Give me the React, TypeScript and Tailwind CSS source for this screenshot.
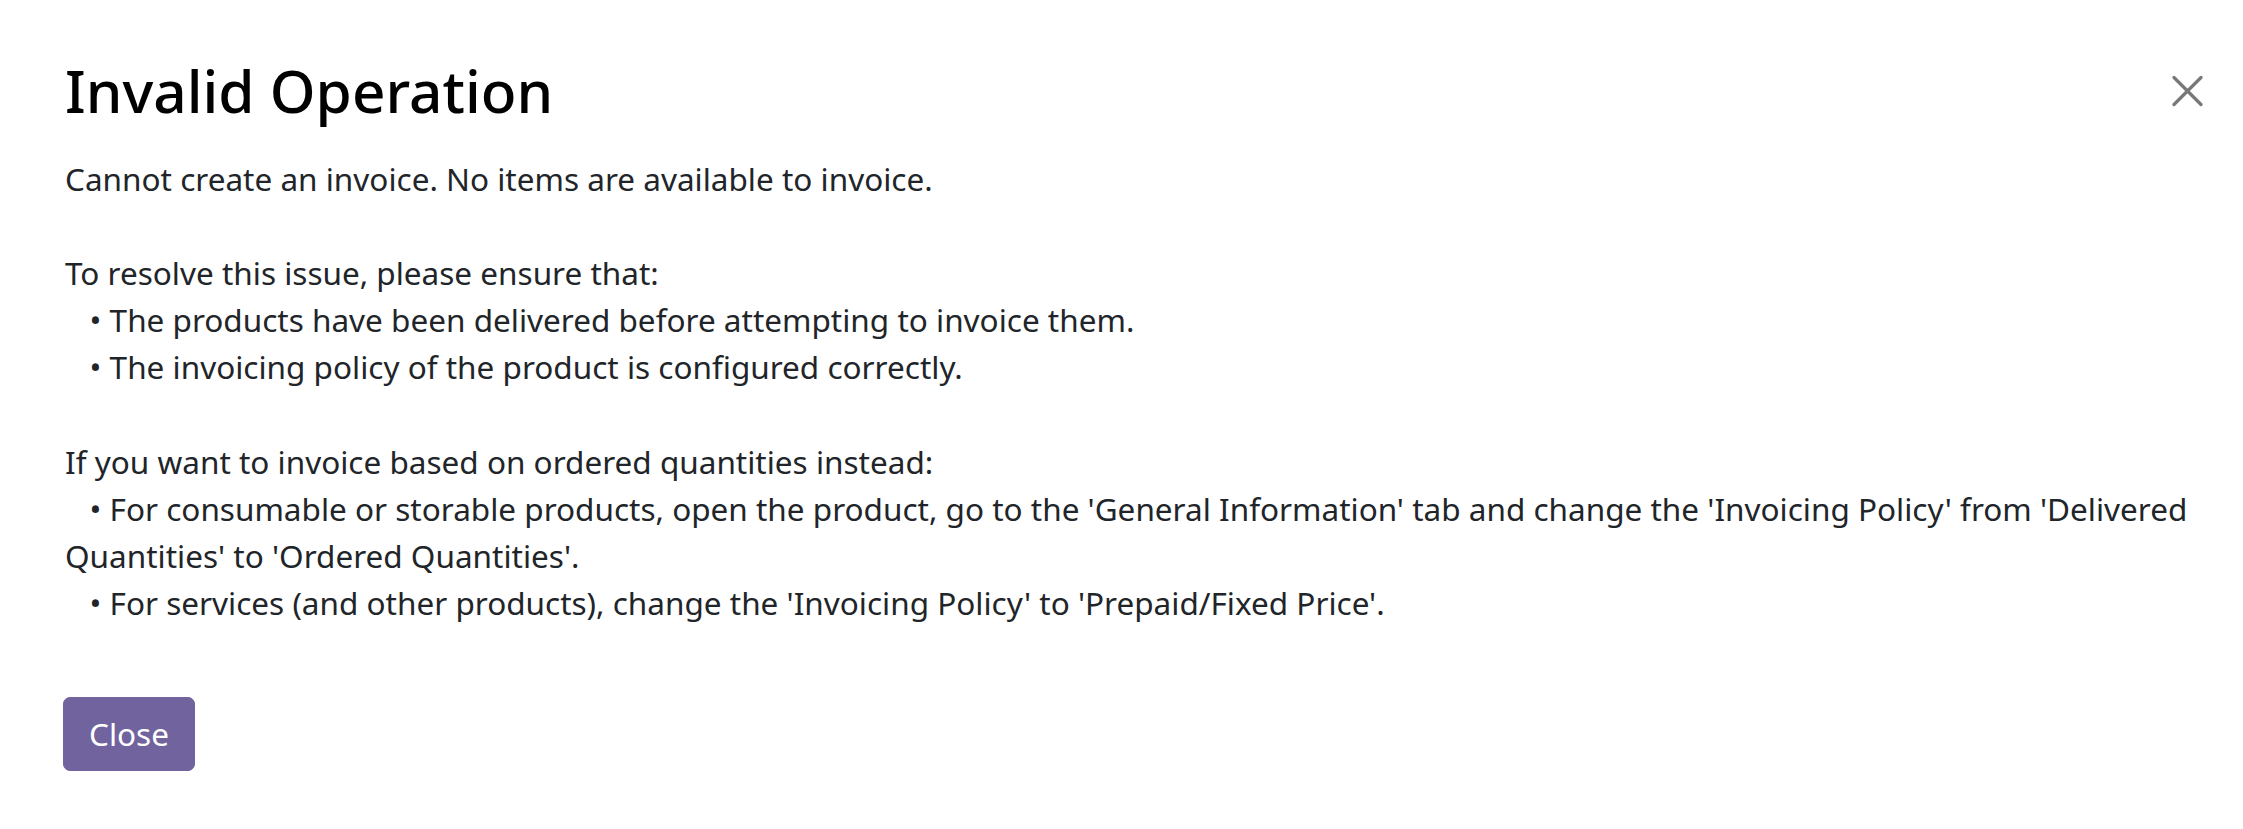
export default function App() {
  const message = `Cannot create an invoice. No items are available to invoice.

To resolve this issue, please ensure that:
   • The products have been delivered before attempting to invoice them.
   • The invoicing policy of the product is configured correctly.

If you want to invoice based on ordered quantities instead:
   • For consumable or storable products, open the product, go to the 'General Information' tab and change the 'Invoicing Policy' from 'Delivered Quantities' to 'Ordered Quantities'.
   • For services (and other products), change the 'Invoicing Policy' to 'Prepaid/Fixed Price'.`;

  return (
    <div className="min-h-screen w-full bg-white font-['Noto_Sans',sans-serif]">
      {/* Header */}
      <header className="flex items-start justify-between pl-[65px] pr-[40px] pt-[55px]">
        <h4 className="text-[58.5px] font-medium leading-[71px] text-black">Invalid Operation</h4>
        <button className="mt-[20px] flex h-[32px] w-[31px] items-center justify-center text-[#787878]">
          <svg width="31" height="32" viewBox="0 0 31 32" fill="none">
            <path d="M2 2.5L29 29.5M29 2.5L2 29.5" stroke="currentColor" strokeWidth="3.2" strokeLinecap="round" />
          </svg>
        </button>
      </header>

      {/* Body */}
      <main className="pl-[65px] pr-[48px] pt-[28.5px]">
        <p className="whitespace-pre-wrap text-[31.5px] leading-[47.2px] text-[#212529]">{message}</p>
      </main>

      {/* Footer */}
      <footer className="pl-[63px] pt-[70px]">
        <button className="rounded-[7px] border border-[#71639e] bg-[#71639e] px-[25px] py-[12.5px] text-[31.5px] leading-[47px] text-white">
          Close
        </button>
      </footer>
    </div>
  );
}
